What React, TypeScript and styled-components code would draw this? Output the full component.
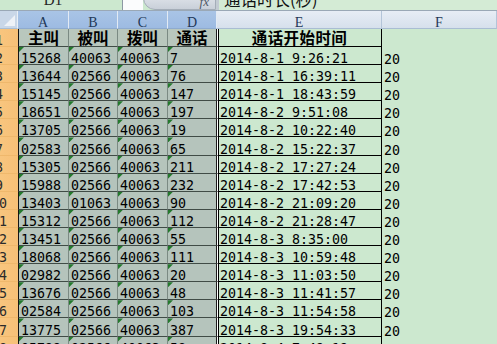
import styled, { createGlobalStyle } from "styled-components";

const GlobalStyle = createGlobalStyle`
  html, body {
    margin: 0;
    padding: 0;
    background: #cce8cf;
  }
`;

const COLS = "38px 51px 49px 50px 49px 165px 1fr";

const App: React.FC = () => {
  return (
    <Page>
      <GlobalStyle />
      <FormulaBar>
        <FormulaInner>
          <NameBox>D1</NameBox>
          <DropBtn>
            <Caret />
          </DropBtn>
          <FxPill>
            <Fx>fx</Fx>
          </FxPill>
          <FormulaText>通话时长(秒)</FormulaText>
        </FormulaInner>
      </FormulaBar>

      <HeadRow>
        <Corner />
        {["A", "B", "C", "D"].map((c) => (
          <ColHead key={c} $sel>
            {c}
          </ColHead>
        ))}
        <ColHead>E</ColHead>
        <ColHead>F</ColHead>
      </HeadRow>

      <Row $h={18}>
        <RowNum>1</RowNum>
        {["主叫", "被叫", "拨叫", "通话"].map((t, i) => (
          <SelCell key={t} $first={i === 0} $last={i === 3} $title>
            {t}
          </SelCell>
        ))}
        <EntryCell $title>通话开始时间</EntryCell>
        <PlainCell />
      </Row>

      {records.map((r) => (
        <Row key={r.id} $h={18.1}>
          <RowNum>{r.id}</RowNum>
          <SelCell $first $flag>
            {r.caller}
          </SelCell>
          <SelCell $flag>{r.callee}</SelCell>
          <SelCell $flag>{r.dial}</SelCell>
          <SelCell $last $flag>
            {r.secs}
          </SelCell>
          <EntryCell>{r.start}</EntryCell>
          <PlainCell>20</PlainCell>
        </Row>
      ))}
    </Page>
  );
};

const Page = styled.div`
  width: 497px;
  height: 344px;
  overflow: hidden;
  background: #cce8cf;
  font-family: "DejaVu Sans Mono", monospace;
  color: #000;
`;

const FormulaBar = styled.div`
  height: 10px;
  overflow: hidden;
  border-bottom: 1px solid #9aa8b6;
`;

const FormulaInner = styled.div`
  display: flex;
  height: 24px;
  margin-top: -14px;
`;

const NameBox = styled.div`
  width: 123px;
  display: flex;
  align-items: flex-end;
  justify-content: center;
  padding: 0 16px 2px 0;
  box-sizing: border-box;
  border-right: 1px solid #8c98a4;
  font: 15px/15px "Liberation Serif", serif;
  color: #222;
`;

const DropBtn = styled.div`
  width: 20px;
  background: #fbfcfd;
  position: relative;
`;

const Caret = styled.div`
  position: absolute;
  left: 7px;
  bottom: 10px;
  width: 0;
  height: 0;
  border-left: 3px solid transparent;
  border-right: 3px solid transparent;
  border-top: 3px solid #333;
`;

const FxPill = styled.div`
  width: 73px;
  display: flex;
  align-items: flex-end;
  justify-content: flex-end;
  box-sizing: border-box;
  padding: 0 6px 1px 0;
  border: 1px solid #a4adb8;
  border-radius: 14px 0 0 14px;
  background: linear-gradient(#eef1f5, #c9d0d9);
`;

const Fx = styled.span`
  font: italic 13px/13px "Liberation Serif", serif;
  color: #4f5a66;
`;

const FormulaText = styled.div`
  flex: 1;
  display: flex;
  align-items: flex-end;
  padding: 0 0 3px 5px;
  border-left: 3px solid #c3cbd3;
  background: #d4ebd5;
  font: 16.5px/15px "Noto Sans CJK SC", sans-serif;
  color: #111;
`;

const HeadRow = styled.div`
  display: grid;
  grid-template-columns: ${COLS};
  height: 18px;
  margin-left: -20px;
`;

const Corner = styled.div`
  position: relative;
  background: #c9d7e8;
  border-right: 1px solid #e9eff6;
  border-bottom: 1px solid #a9bdd3;

  &::after {
    content: "";
    position: absolute;
    right: 2px;
    bottom: 2px;
    width: 11px;
    height: 11px;
    background: #eef2f7;
    clip-path: polygon(100% 0, 100% 100%, 0 100%);
  }
`;

const ColHead = styled.div<{ $sel?: boolean }>`
  display: flex;
  align-items: flex-end;
  justify-content: center;
  font: 14px/11px "Liberation Serif", serif;
  color: #1f3858;
  background: ${(p) =>
    p.$sel ? "linear-gradient(#a9c4e6, #9dbbe2)" : "linear-gradient(#e7edf5, #d6e0ec)"};
  border-right: 1px solid ${(p) => (p.$sel ? "#e2eaf4" : "#b3c4d8")};
  border-bottom: 1px solid ${(p) => (p.$sel ? "#8fabcf" : "#a9bdd3")};
`;

const Row = styled.div<{ $h: number }>`
  display: grid;
  grid-template-columns: ${COLS};
  height: ${(p) => p.$h}px;
  margin-left: -20px;
`;

const RowNum = styled.div`
  display: flex;
  align-items: flex-end;
  justify-content: center;
  font-size: 13.3px;
  line-height: 11px;
  color: #2b2b2b;
  background: linear-gradient(90deg, #f9cb86, #f7c077);
  border-bottom: 1px solid #efb86c;
`;

const SelCell = styled.div<{ $first?: boolean; $last?: boolean; $flag?: boolean; $title?: boolean }>`
  position: relative;
  display: flex;
  align-items: ${(p) => (p.$title ? "center" : "flex-end")};
  justify-content: ${(p) => (p.$title ? "center" : "flex-start")};
  padding-left: ${(p) => (p.$title ? 0 : 2)}px;
  background: ${(p) => (p.$title ? "#b9c7bd" : "#b5c4bc")};
  border-left: ${(p) => (p.$first ? "1px solid #151515" : "none")};
  border-right: 1px solid ${(p) => (p.$last ? "#1c1c1c" : "#7b8a83")};
  border-bottom: 1px solid #404c46;
  font-size: 13.3px;
  line-height: 11px;
  white-space: nowrap;
  ${(p) =>
    p.$title &&
    `
    font: bold 15.5px/17px "Noto Sans CJK SC", sans-serif;
  `}

  &::before {
    content: "";
    display: ${(p) => (p.$flag ? "block" : "none")};
    position: absolute;
    top: 0;
    left: 0;
    width: 5px;
    height: 5px;
    background: #23792c;
    clip-path: polygon(0 0, 100% 0, 0 100%);
  }
`;

const EntryCell = styled.div<{ $title?: boolean }>`
  display: flex;
  align-items: ${(p) => (p.$title ? "center" : "flex-end")};
  justify-content: ${(p) => (p.$title ? "center" : "flex-start")};
  padding-left: ${(p) => (p.$title ? 0 : 2)}px;
  border-left: 1px solid #fff;
  box-shadow: inset 1px 0 #000;
  border-right: 1px solid #000;
  border-bottom: 1px solid #000;
  font-size: 13.3px;
  line-height: 11px;
  white-space: nowrap;
  ${(p) =>
    p.$title &&
    `
    font: bold 15.5px/17px "Noto Sans CJK SC", sans-serif;
    letter-spacing: 0.4px;
  `}
`;

const PlainCell = styled.div`
  display: flex;
  align-items: flex-end;
  padding-left: 2px;
  font-size: 13.3px;
  line-height: 11px;
`;

const records = [
  { id: 2, caller: "15268", callee: "40063", dial: "40063", secs: "7", start: "2014-8-1 9:26:21" },
  { id: 3, caller: "13644", callee: "02566", dial: "40063", secs: "76", start: "2014-8-1 16:39:11" },
  { id: 4, caller: "15145", callee: "02566", dial: "40063", secs: "147", start: "2014-8-1 18:43:59" },
  { id: 5, caller: "18651", callee: "02566", dial: "40063", secs: "197", start: "2014-8-2 9:51:08" },
  { id: 6, caller: "13705", callee: "02566", dial: "40063", secs: "19", start: "2014-8-2 10:22:40" },
  { id: 7, caller: "02583", callee: "02566", dial: "40063", secs: "65", start: "2014-8-2 15:22:37" },
  { id: 8, caller: "15305", callee: "02566", dial: "40063", secs: "211", start: "2014-8-2 17:27:24" },
  { id: 9, caller: "15988", callee: "02566", dial: "40063", secs: "232", start: "2014-8-2 17:42:53" },
  { id: 10, caller: "13403", callee: "01063", dial: "40063", secs: "90", start: "2014-8-2 21:09:20" },
  { id: 11, caller: "15312", callee: "02566", dial: "40063", secs: "112", start: "2014-8-2 21:28:47" },
  { id: 12, caller: "13451", callee: "02566", dial: "40063", secs: "55", start: "2014-8-3 8:35:00" },
  { id: 13, caller: "18068", callee: "02566", dial: "40063", secs: "111", start: "2014-8-3 10:59:48" },
  { id: 14, caller: "02982", callee: "02566", dial: "40063", secs: "20", start: "2014-8-3 11:03:50" },
  { id: 15, caller: "13676", callee: "02566", dial: "40063", secs: "48", start: "2014-8-3 11:41:57" },
  { id: 16, caller: "02584", callee: "02566", dial: "40063", secs: "103", start: "2014-8-3 11:54:58" },
  { id: 17, caller: "13775", callee: "02566", dial: "40063", secs: "387", start: "2014-8-3 19:54:33" },
  { id: 18, caller: "05799", callee: "02566", dial: "40063", secs: "58", start: "2014-8-4 7:49:19" },
];

export default App;
